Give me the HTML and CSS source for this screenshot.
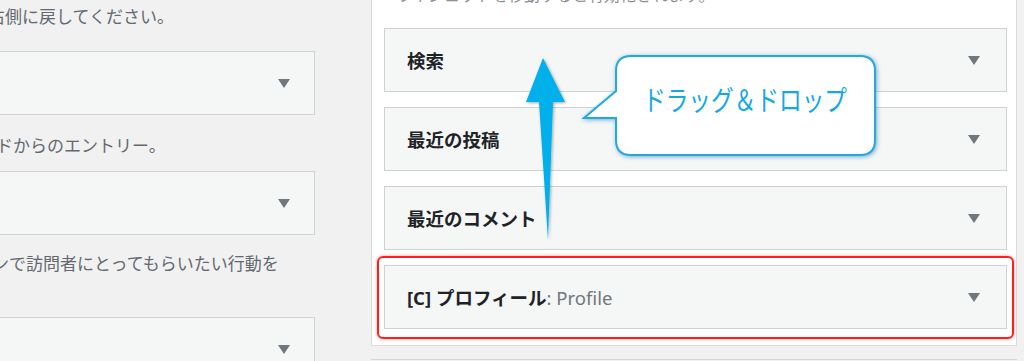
FILE: index.html
```html
<!DOCTYPE html>
<html lang="ja">
<head>
  <meta charset="UTF-8">
  <title>ウィジェット</title>
  <link rel="stylesheet" href="styles.css">
</head>
<body>
  <div class="page">
    <div class="left">
      <p class="desc desc-1">右側に戻してください。</p>
      <div class="box"><span class="toggle"></span></div>
      <p class="desc desc-2">ドからのエントリー。</p>
      <div class="box"><span class="toggle"></span></div>
      <p class="desc desc-3">ンで訪問者にとってもらいたい行動を</p>
      <div class="box"><span class="toggle"></span></div>
    </div>

    <div class="right">
      <div class="panel">
        <p class="panel-desc">ウィジェットを移動すると有効化されます。</p>
        <div class="widget">
          <div class="widget-title">検索</div>
          <span class="toggle"></span>
        </div>
        <div class="widget">
          <div class="widget-title">最近の投稿</div>
          <span class="toggle"></span>
        </div>
        <div class="widget">
          <div class="widget-title">最近のコメント</div>
          <span class="toggle"></span>
        </div>
        <div class="highlight">
          <div class="widget">
            <div class="widget-title">[C] プロフィール<span class="in-title">: Profile</span></div>
            <span class="toggle"></span>
          </div>
        </div>
      </div>
      <div class="panel-next"></div>
    </div>
  </div>

  <svg class="overlay" width="1024" height="361" viewBox="0 0 1024 361">
    <defs>
      <filter id="shadow" x="-50%" y="-50%" width="200%" height="200%">
        <feDropShadow dx="1" dy="1" stdDeviation="1.5" flood-color="#000" flood-opacity="0.35"/>
      </filter>
      <filter id="glow" x="-20%" y="-30%" width="140%" height="160%">
        <feDropShadow dx="1" dy="1" stdDeviation="2" flood-color="#1a7fae" flood-opacity="0.6"/>
      </filter>
    </defs>
    <polygon points="543,58 565,102 553,102 548,240 539,102 526,102" fill="#00b0eb" filter="url(#shadow)"/>
    <path d="M631,56 H860 Q875,56 875,71 V140 Q875,155 860,155 H631 Q616,155 616,140 V118 L584,118 L616,91 V71 Q616,56 631,56 Z"
          fill="#fff" stroke="#22a9df" stroke-width="2" filter="url(#glow)"/>
    <text class="callout" x="643" y="111" textLength="204" lengthAdjust="spacingAndGlyphs">ドラッグ＆ドロップ</text>
  </svg>
</body>
</html>
```

FILE: styles.css
```css
body {
  margin: 0;
  background: #f1f1f1;
  font-family: "Noto Sans", "Noto Sans CJK JP", sans-serif;
  overflow: hidden;
  height: 361px;
}
.page {
  display: flex;
  align-items: flex-start;
}
.left {
  flex: none;
  width: 327px;
  margin-left: -12px;
  padding-top: 5px;
}
.desc {
  margin: 0;
  font-size: 17px;
  line-height: 24px;
  color: #646970;
  white-space: nowrap;
}
.desc-2 {
  padding-left: 8px;
  margin-top: 19px;
}
.desc-3 {
  padding-left: 4px;
  margin-top: 17px;
}
.box {
  box-sizing: border-box;
  height: 64px;
  background: #f5f6f6;
  border: 1px solid #cfd1d3;
  display: flex;
  align-items: center;
  justify-content: flex-end;
  padding-right: 24px;
  margin-top: 22px;
}
.desc-2 + .box {
  margin-top: 13px;
}
.desc-3 + .box {
  margin-top: 41px;
}
.toggle {
  width: 0;
  height: 0;
  border-left: 6px solid transparent;
  border-right: 6px solid transparent;
  border-top: 9px solid #72777c;
}
.right {
  flex: none;
  margin-left: 56px;
  width: 646px;
}
.panel {
  box-sizing: border-box;
  background: #fff;
  border: 1px solid #dcdcde;
  border-top: none;
  margin-top: -17px;
  padding: 0 9px 16px 12px;
}
.panel-desc {
  margin: 0;
  padding-left: 12px;
  font-size: 16px;
  line-height: 24px;
  color: #8c8f94;
}
.widget {
  box-sizing: border-box;
  height: 64px;
  background: #f5f6f6;
  border: 1px solid #cfd1d3;
  display: flex;
  align-items: center;
  justify-content: space-between;
  padding: 0 26px 0 22px;
  margin-top: 15px;
}
.panel-desc + .widget {
  margin-top: 21px;
}
.widget-title {
  font-size: 18.5px;
  font-weight: bold;
  color: #1d2327;
}
.in-title {
  font-weight: normal;
  color: #72777c;
}
.highlight {
  position: relative;
}
.highlight::after {
  content: "";
  position: absolute;
  top: -9px;
  bottom: -10px;
  left: -7px;
  right: -7px;
  border: 2px solid #ff1f1f;
  border-radius: 6px;
  box-shadow: 0 0 3px rgba(255, 40, 40, 0.5);
}
.panel-next {
  height: 20px;
  margin-top: 13px;
  border-top: 1px solid #d5d5d5;
}
.overlay {
  position: absolute;
  top: 0;
  left: 0;
  pointer-events: none;
}
.callout {
  font-family: "Noto Sans CJK JP", sans-serif;
  font-size: 28px;
  fill: #12a8e3;
}
```
